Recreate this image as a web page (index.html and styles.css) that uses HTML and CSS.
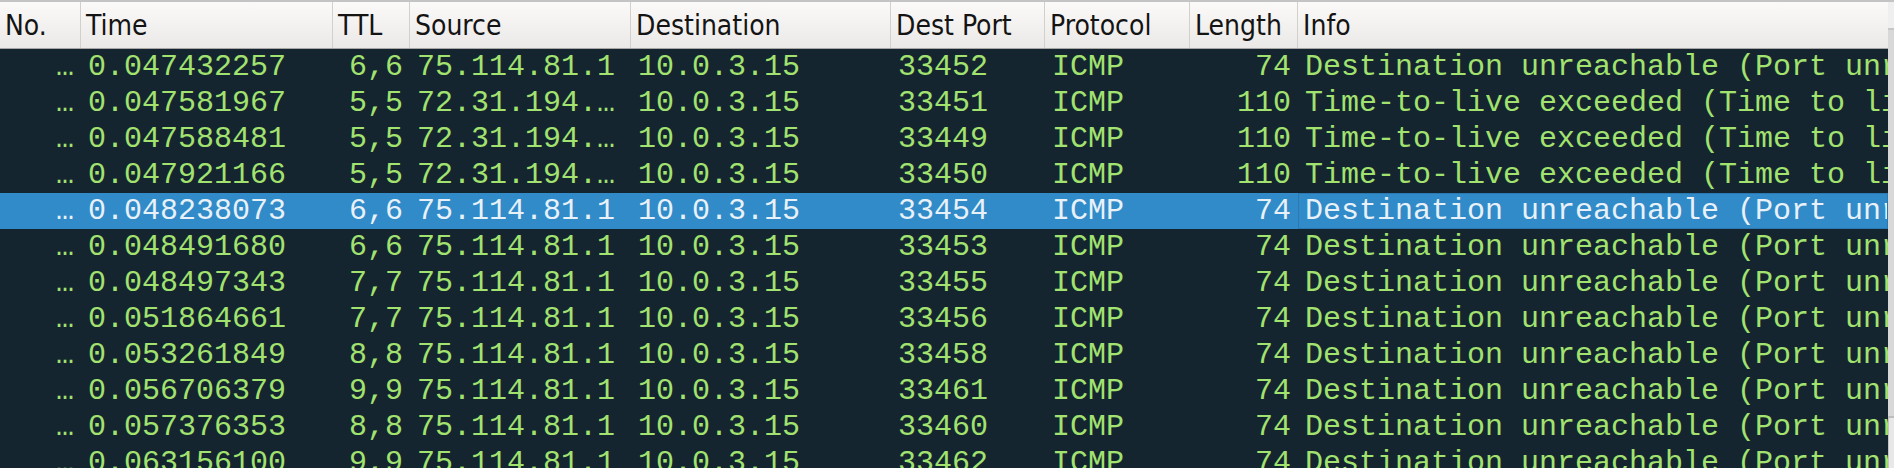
FILE: index.html
```html
<!DOCTYPE html>
<html>
<head>
<meta charset="utf-8">
<link rel="stylesheet" href="styles.css">
</head>
<body>
<div class="view">
  <div class="list">
    <div class="head">
      <div class="hc">No.</div>
      <div class="hc">Time</div>
      <div class="hc">TTL</div>
      <div class="hc">Source</div>
      <div class="hc">Destination</div>
      <div class="hc">Dest Port</div>
      <div class="hc">Protocol</div>
      <div class="hc">Length</div>
      <div class="hc last">Info</div>
    </div>
    <div class="rows">
      <div class="row"><span class="c r">…</span><span class="c">0.047432257</span><span class="c r">6,6</span><span class="c">75.114.81.1</span><span class="c">10.0.3.15</span><span class="c">33452</span><span class="c">ICMP</span><span class="c r">74</span><span class="c info">Destination unreachable (Port unreachable)</span></div>
      <div class="row"><span class="c r">…</span><span class="c">0.047581967</span><span class="c r">5,5</span><span class="c">72.31.194.…</span><span class="c">10.0.3.15</span><span class="c">33451</span><span class="c">ICMP</span><span class="c r">110</span><span class="c info">Time-to-live exceeded (Time to live exceeded in transit)</span></div>
      <div class="row"><span class="c r">…</span><span class="c">0.047588481</span><span class="c r">5,5</span><span class="c">72.31.194.…</span><span class="c">10.0.3.15</span><span class="c">33449</span><span class="c">ICMP</span><span class="c r">110</span><span class="c info">Time-to-live exceeded (Time to live exceeded in transit)</span></div>
      <div class="row"><span class="c r">…</span><span class="c">0.047921166</span><span class="c r">5,5</span><span class="c">72.31.194.…</span><span class="c">10.0.3.15</span><span class="c">33450</span><span class="c">ICMP</span><span class="c r">110</span><span class="c info">Time-to-live exceeded (Time to live exceeded in transit)</span></div>
      <div class="row sel"><span class="c r">…</span><span class="c">0.048238073</span><span class="c r">6,6</span><span class="c">75.114.81.1</span><span class="c">10.0.3.15</span><span class="c">33454</span><span class="c">ICMP</span><span class="c r">74</span><span class="c info focus">Destination unreachable (Port unreachable)</span></div>
      <div class="row"><span class="c r">…</span><span class="c">0.048491680</span><span class="c r">6,6</span><span class="c">75.114.81.1</span><span class="c">10.0.3.15</span><span class="c">33453</span><span class="c">ICMP</span><span class="c r">74</span><span class="c info">Destination unreachable (Port unreachable)</span></div>
      <div class="row"><span class="c r">…</span><span class="c">0.048497343</span><span class="c r">7,7</span><span class="c">75.114.81.1</span><span class="c">10.0.3.15</span><span class="c">33455</span><span class="c">ICMP</span><span class="c r">74</span><span class="c info">Destination unreachable (Port unreachable)</span></div>
      <div class="row"><span class="c r">…</span><span class="c">0.051864661</span><span class="c r">7,7</span><span class="c">75.114.81.1</span><span class="c">10.0.3.15</span><span class="c">33456</span><span class="c">ICMP</span><span class="c r">74</span><span class="c info">Destination unreachable (Port unreachable)</span></div>
      <div class="row"><span class="c r">…</span><span class="c">0.053261849</span><span class="c r">8,8</span><span class="c">75.114.81.1</span><span class="c">10.0.3.15</span><span class="c">33458</span><span class="c">ICMP</span><span class="c r">74</span><span class="c info">Destination unreachable (Port unreachable)</span></div>
      <div class="row"><span class="c r">…</span><span class="c">0.056706379</span><span class="c r">9,9</span><span class="c">75.114.81.1</span><span class="c">10.0.3.15</span><span class="c">33461</span><span class="c">ICMP</span><span class="c r">74</span><span class="c info">Destination unreachable (Port unreachable)</span></div>
      <div class="row"><span class="c r">…</span><span class="c">0.057376353</span><span class="c r">8,8</span><span class="c">75.114.81.1</span><span class="c">10.0.3.15</span><span class="c">33460</span><span class="c">ICMP</span><span class="c r">74</span><span class="c info">Destination unreachable (Port unreachable)</span></div>
      <div class="row"><span class="c r">…</span><span class="c">0.063156100</span><span class="c r">9,9</span><span class="c">75.114.81.1</span><span class="c">10.0.3.15</span><span class="c">33462</span><span class="c">ICMP</span><span class="c r">74</span><span class="c info">Destination unreachable (Port unreachable)</span></div>
    </div>
  </div>
  <div class="scroll">
    <div class="sb-top"></div>
    <div class="sb-track"></div>
    <div class="sb-thumb"></div>
  </div>
</div>
</body>
</html>
```

FILE: styles.css
```css
html, body {
  margin: 0;
  padding: 0;
  width: 1894px;
  height: 468px;
  overflow: hidden;
  background: #15252f;
}

.view {
  display: flex;
  width: 1894px;
  height: 468px;
  border-top: 2px solid #c4c4c4;
  box-sizing: border-box;
}

.list {
  flex: 1;
  min-width: 0;
  display: flex;
  flex-direction: column;
  overflow: hidden;
}

.head {
  display: grid;
  grid-template-columns: 81px 252px 77px 221px 260px 154px 145px 108px 1fr;
  height: 47px;
  box-sizing: border-box;
  border-bottom: 1px solid #a9a7a5;
  background: linear-gradient(#fbfaf9, #ebe9e7);
  flex: none;
}

.hc {
  display: flex;
  align-items: center;
  padding-left: 5px;
  border-right: 1px solid #d2cfcc;
  font-family: "DejaVu Sans Condensed", "DejaVu Sans", "Liberation Sans Narrow", sans-serif;
  font-stretch: condensed;
  font-size: 28px;
  color: #141414;
  white-space: nowrap;
  overflow: hidden;
}

.hc.last {
  border-right: none;
}

.rows {
  display: flex;
  flex-direction: column;
}

.row {
  display: grid;
  grid-template-columns: 81px 252px 77px 221px 260px 154px 145px 108px 1fr;
  height: 36px;
  flex: none;
  font-family: "Liberation Mono", "DejaVu Sans Mono", monospace;
  font-size: 30px;
  color: #a2e26f;
}

.c {
  display: flex;
  align-items: center;
  padding: 0 7px;
  white-space: nowrap;
  overflow: hidden;
  box-sizing: border-box;
}

.c.r {
  justify-content: flex-end;
}

.c.info {
  padding-right: 0;
}

.row.sel {
  background: #308bc8;
  color: #e9f1f8;
}

.c.focus {
  border: 1px solid #2a79b2;
  padding-left: 6px;
}

.scroll {
  width: 6px;
  flex: none;
  display: flex;
  flex-direction: column;
  background: #d6d6d6;
}

.sb-top {
  height: 26px;
  background: #efefef;
  border-bottom: 2px solid #c6c6c6;
  flex: none;
}

.sb-track {
  flex: 1;
  background: #d8d8d8;
}

.sb-thumb {
  height: 50px;
  flex: none;
  background: #e8e8e8;
  border-top: 2px solid #bdbdbd;
  border-left: 1px solid #c4c4c4;
}
```
